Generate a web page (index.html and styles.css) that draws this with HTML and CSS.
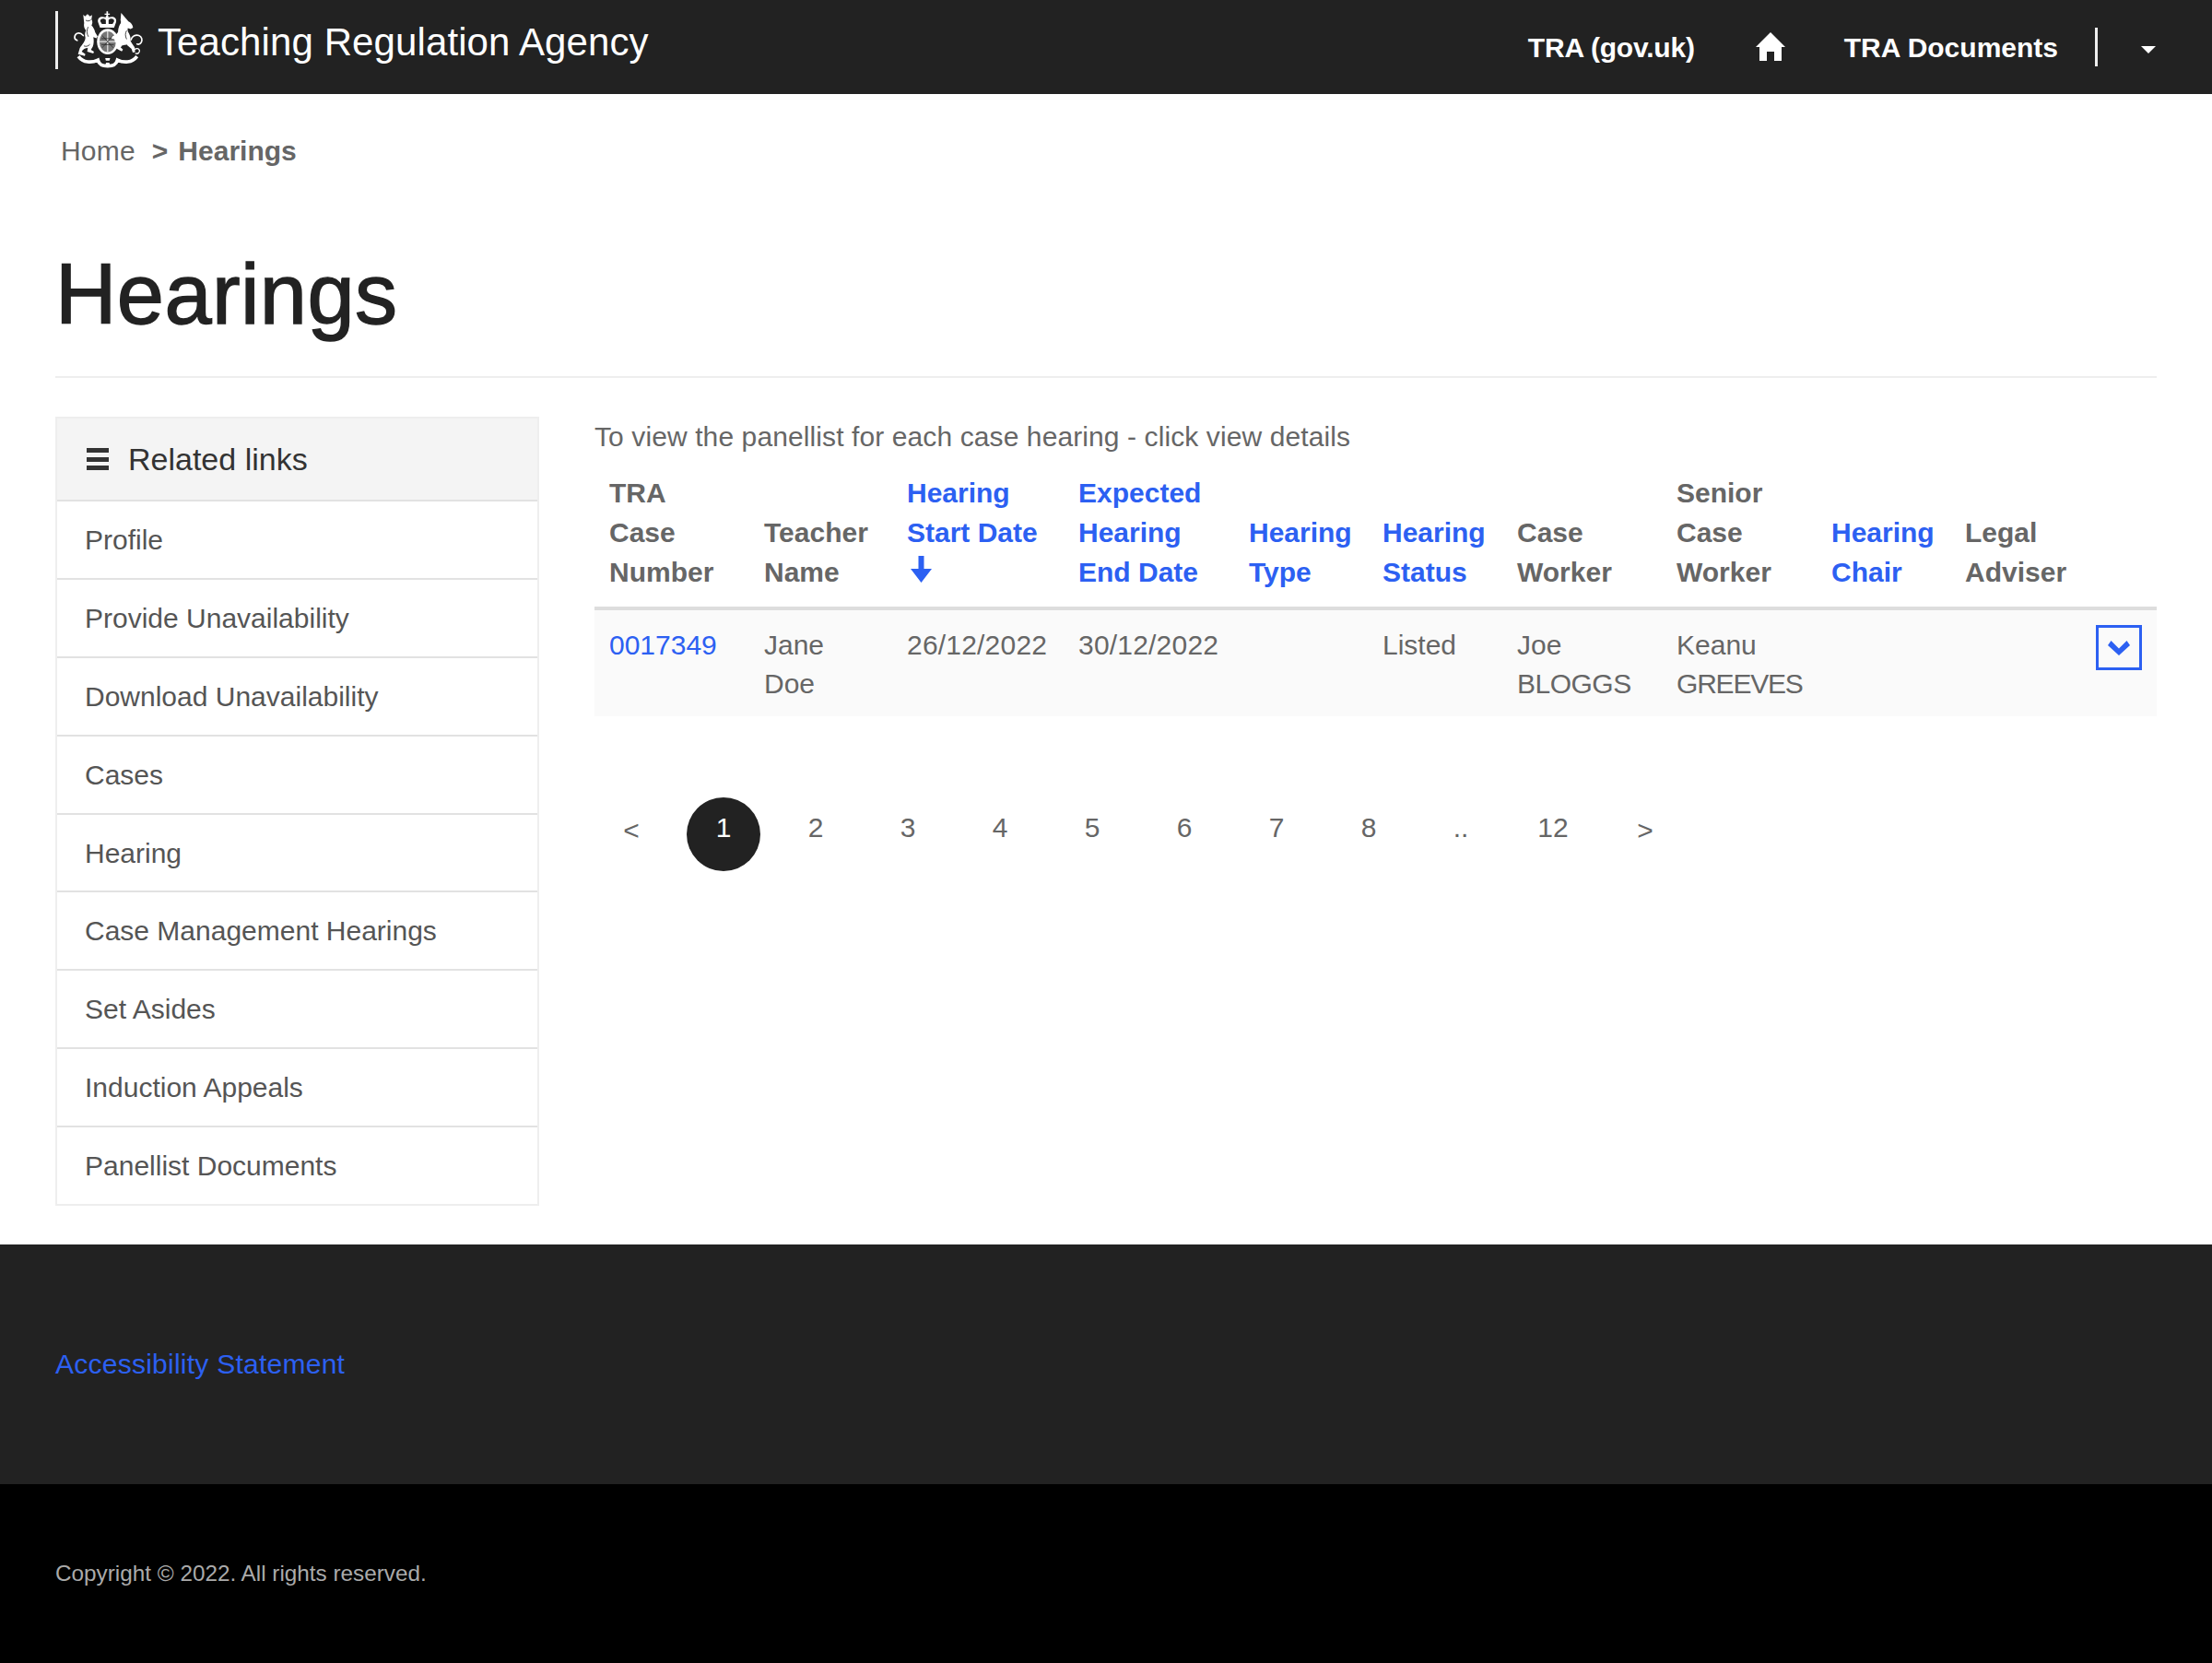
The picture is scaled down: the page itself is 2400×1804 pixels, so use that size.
FILE: index.html
```html
<!DOCTYPE html>
<html lang="en">
<head>
<meta charset="utf-8">
<title>Hearings - Teaching Regulation Agency</title>
<link rel="stylesheet" href="styles.css">
</head>
<body>
<header class="topbar">
  <a class="brand" href="#">
    <svg class="crest" viewBox="57 36 230 190" aria-hidden="true">
      <!-- crown -->
      <g fill="#fff">
        <path d="M166 37h5v7h6v4h-6v6h-5v-6h-6v-4h6z"/>
        <circle cx="168" cy="56" r="5"/>
        <path d="M145 90l-6-16c-4-12 4-20 14-19 7 0 12 3 15 6 3-3 8-6 15-6 10-1 18 7 14 19l-6 16z"/>
      </g>
      <path fill="#222" d="M151 78l-5-8c-1-6 3-9 9-9 3 0 6 1 9 4v13zM173 78V65c3-3 6-4 9-4 6 0 10 3 9 9l-5 8z"/>
      <!-- shield with garter -->
      <ellipse cx="170" cy="136" rx="35" ry="42" fill="#fff"/>
      <ellipse cx="170" cy="136" rx="27" ry="34" fill="#777"/>
      <path fill="none" stroke="#fff" stroke-width="3" d="M170 102v68M143 136h54"/>
      <path fill="none" stroke="#222" stroke-width="2" d="M152 116l36 40M188 116l-36 40M150 126h40M150 146h40"/>
      <!-- lion -->
      <g fill="#fff">
        <path d="M90 48l6 5 8-7 8 7 7-4-2 14c4 6 4 14 0 20 6 6 10 14 12 22l8 14-4 6-10-4c2 10 2 22-2 32l-6 10 10 6-2 6-20-6 2-12c-8 0-16 4-20 12l12 8-2 6-22-6 6-20c8-12 18-22 18-34-2-8-2-16 2-24-6-6-8-16-6-24z"/>
      </g>
      <path fill="none" stroke="#fff" stroke-width="5" stroke-linecap="round" d="M90 116c-12-14-26-8-28 4-1 6 3 10 8 12"/>
      <!-- unicorn -->
      <g fill="#fff">
        <path d="M214 42l24 28c8 3 13 10 15 20l-8 5-9-3c-2 6 0 12 4 18 4 8 6 14 4 22 4 8 8 14 14 22l2 16-8 2-4-12-16-14c-8 0-14 2-20 8l8 8-4 6-18-10 4-14c-6-4-10-10-10-16l-10-2 4-8c8-2 16-8 18-14 0-8 2-16 6-24 4-5 4-10 2-14z"/>
      </g>
      <path fill="none" stroke="#fff" stroke-width="5" stroke-linecap="round" d="M246 130c4-12 16-18 26-14 10 4 12 14 8 22-3 6-8 8-14 6"/>
      <path fill="none" stroke="#fff" stroke-width="4" d="M258 162c6-6 14-4 16 2 2 8-6 14-14 10"/>
      <!-- creature details -->
      <path fill="none" stroke="#222" stroke-width="2.500" d="M98 66c6 4 13 3 17-2M106 88c-5 10-5 22 1 32M92 150c8 3 14 1 20-5M232 100c-5 8-5 18 0 28M216 150c6 3 12 2 18-3"/>
      <!-- motto ribbon -->
      <path fill="none" stroke="#fff" stroke-width="11" d="M74 184c16 22 44 22 64 12 4 16 14 20 32 20s28-4 32-20c20 10 48 10 64-12"/>
      <path fill="#222" d="M166 198h8l2 8h-12z"/>
      <path fill="#fff" d="M162 190h16l-2 8h-12zM165 205h10l3 8h-16z"/>
    </svg>
    <span class="brand-name">Teaching Regulation Agency</span>
  </a>
  <nav class="topnav">
    <a class="topnav-link topnav-gov" href="#">TRA (gov.uk)</a>
    <a class="topnav-home" href="#" aria-label="Home">
      <svg viewBox="0 0 32 31" class="home-icon" aria-hidden="true"><path fill="#fff" d="M16 0 32 16H28V31H20V21H12V31H4V16H0z"/></svg>
    </a>
    <a class="topnav-link topnav-docs" href="#">TRA Documents</a>
    <span class="topnav-divider"></span>
    <span class="topnav-caret"></span>
  </nav>
</header>

<main class="page">
  <div class="crumbs">
    <a class="crumb-home" href="#">Home</a>
    <b class="crumb-sep">&gt;</b>
    <b class="crumb-current">Hearings</b>
  </div>
  <h1 class="page-title">Hearings</h1>

  <div class="content">
    <aside class="sidebar">
      <div class="side-head">
        <span class="burger"><i></i><i></i><i></i></span>
        <span>Related links</span>
      </div>
      <a class="side-item" href="#">Profile</a>
      <a class="side-item" href="#">Provide Unavailability</a>
      <a class="side-item" href="#">Download Unavailability</a>
      <a class="side-item" href="#">Cases</a>
      <a class="side-item" href="#">Hearing</a>
      <a class="side-item" href="#">Case Management Hearings</a>
      <a class="side-item" href="#">Set Asides</a>
      <a class="side-item" href="#">Induction Appeals</a>
      <a class="side-item" href="#">Panellist Documents</a>
    </aside>

    <section class="results">
      <p class="intro">To view the panellist for each case hearing - click view details</p>
      <table class="hearings">
        <colgroup>
          <col class="c-case"><col class="c-teacher"><col class="c-start"><col class="c-end"><col class="c-type">
          <col class="c-status"><col class="c-worker"><col class="c-senior"><col class="c-chair"><col class="c-legal"><col class="c-action">
        </colgroup>
        <thead>
          <tr>
            <th>TRA<br>Case<br>Number</th>
            <th>Teacher<br>Name</th>
            <th><a href="#">Hearing<br>Start Date<br><svg class="sort-arrow" viewBox="0 0 23 29" aria-hidden="true"><path fill="#2c60f2" d="M8.500 0h6v14H23L11.500 29 0 14h8.500z"/></svg></a></th>
            <th><a href="#">Expected<br>Hearing<br>End Date</a></th>
            <th><a href="#">Hearing<br>Type</a></th>
            <th><a href="#">Hearing<br>Status</a></th>
            <th>Case<br>Worker</th>
            <th>Senior<br>Case<br>Worker</th>
            <th><a href="#">Hearing<br>Chair</a></th>
            <th>Legal<br>Adviser</th>
            <th></th>
          </tr>
        </thead>
        <tbody>
          <tr>
            <td><a href="#">0017349</a></td>
            <td>Jane<br>Doe</td>
            <td class="date">26/12/2022</td>
            <td class="date">30/12/2022</td>
            <td></td>
            <td>Listed</td>
            <td>Joe<br><span class="caps">BLOGGS</span></td>
            <td>Keanu<br><span class="caps caps-tight">GREEVES</span></td>
            <td></td>
            <td></td>
            <td class="action-cell">
              <a class="expand" href="#" aria-label="View details">
                <svg viewBox="0 0 24 16" class="chevron" aria-hidden="true"><path fill="#2c60f2" d="M3.500 0 12 8.500 20.500 0 24 5 12 16 0 5z"/></svg>
              </a>
            </td>
          </tr>
        </tbody>
      </table>
      <ul class="pager">
        <li class="pg pg-arrow">&lt;</li>
        <li class="pg pg-active">1</li>
        <li class="pg">2</li>
        <li class="pg">3</li>
        <li class="pg">4</li>
        <li class="pg">5</li>
        <li class="pg">6</li>
        <li class="pg">7</li>
        <li class="pg">8</li>
        <li class="pg">..</li>
        <li class="pg">12</li>
        <li class="pg pg-arrow">&gt;</li>
      </ul>
    </section>
  </div>
</main>

<footer>
  <div class="foot-links"><a href="#">Accessibility Statement</a></div>
  <div class="foot-copy">Copyright © 2022. All rights reserved.</div>
</footer>
</body>
</html>
```

FILE: styles.css
```css
* { box-sizing: border-box; }
html, body { margin: 0; padding: 0; }
body {
  font-family: "Liberation Sans", Arial, sans-serif;
  font-size: 30px;
  line-height: 42px;
  color: #666;
  background: #fff;
}
a { text-decoration: none; color: inherit; }

.topbar {
  height: 102px;
  background: #222;
  display: flex;
  justify-content: space-between;
  padding: 0 61px 0 60px;
}
.brand {
  display: flex;
  align-items: flex-start;
  padding-top: 12px;
  color: #fff;
}
.crest {
  width: 77px;
  height: 63px;
  margin-left: 16px;
}
.brand::before {
  content: "";
  width: 3px;
  height: 63px;
  background: #eee;
  order: -1;
}
.brand-name {
  font-size: 42px;
  line-height: 67px;
  margin-left: 15px;
  letter-spacing: 0.1px;
}
.topnav {
  display: flex;
  align-items: flex-start;
  color: #fff;
  font-weight: 700;
}
.topnav-link { line-height: 42px; padding-top: 31px; }
.topnav-gov { letter-spacing: -0.2px; }
.topnav-home { margin-left: 66px; padding-top: 35px; }
.home-icon { display: block; width: 32px; height: 31px; }
.topnav-docs { margin-left: 64px; }
.topnav-divider {
  width: 3px;
  height: 42px;
  margin-left: 40px;
  margin-top: 30px;
  background: #eee;
}
.topnav-caret {
  width: 0;
  height: 0;
  margin-left: 47px;
  margin-top: 50px;
  border-left: 8px solid transparent;
  border-right: 8px solid transparent;
  border-top: 8px solid #fff;
}

.page { padding: 41px 60px 0; }
.crumbs {
  display: flex;
  padding-left: 6px;
  height: 42px;
}
.crumb-home { letter-spacing: 0.2px; }
.crumb-sep { margin-left: 18px; }
.crumb-current { margin-left: 11px; }
.page-title {
  margin: 75px 0 0;
  height: 150px;
  font-size: 92px;
  line-height: 118px;
  font-weight: 400;
  letter-spacing: 0.4px;
  color: #222;
  -webkit-text-stroke: 1.4px #222;
  border-bottom: 2px solid #eee;
}

.content {
  display: flex;
  align-items: flex-start;
  margin-top: 42px;
  padding-bottom: 42px;
}
.sidebar {
  width: 525px;
  flex: none;
  border: 2px solid #eee;
  border-top: 0;
}
.side-head {
  display: flex;
  align-items: center;
  height: 90px;
  padding-left: 32px;
  background: #f4f4f4;
  color: #333;
  font-size: 34px;
  border-top: 2px solid #eee;
}
.burger {
  display: flex;
  flex-direction: column;
  justify-content: space-between;
  width: 24px;
  height: 24px;
  margin-right: 21px;
}
.burger i { display: block; height: 5px; background: #333; }
.side-item {
  display: block;
  height: 84.900px;
  padding-top: 21px;
  padding-left: 30px;
  color: #555;
  border-top: 2px solid #e2e2e2;
}
.results {
  flex: 1;
  margin-left: 60px;
  min-width: 0;
}
.intro { margin: 1px 0 0; height: 42px; color: #666; letter-spacing: 0.1px; }

.hearings {
  width: 100%;
  table-layout: fixed;
  border-collapse: collapse;
  margin-top: 18px;
}
.c-case { width: 168px; }
.c-teacher { width: 155px; }
.c-start { width: 186px; }
.c-end { width: 185px; }
.c-type { width: 145px; }
.c-status { width: 146px; }
.c-worker { width: 173px; }
.c-senior { width: 168px; }
.c-chair { width: 145px; }
.c-legal { width: 141px; }

.hearings th {
  text-align: left;
  vertical-align: bottom;
  padding: 0 16px 16px;
  font-weight: 700;
  line-height: 43px;
  color: #666;
  white-space: nowrap;
  border-bottom: 4px solid #ddd;
}
.hearings th a { color: #2c60f2; }
.sort-arrow {
  display: inline-block;
  width: 23px;
  height: 29px;
  margin-left: 4px;
  vertical-align: -1px;
}
.hearings td {
  vertical-align: top;
  padding: 17px 16px 14px;
  background: #fafafa;
  white-space: nowrap;
}
.hearings td a { color: #2c60f2; }
.hearings .date { letter-spacing: 0.2px; }
.caps { letter-spacing: -0.5px; }
.caps-tight { letter-spacing: -1.2px; }
.hearings .action-cell { padding: 16px 16px 0 0; text-align: right; }
.hearings td .expand {
  display: inline-flex;
  align-items: center;
  justify-content: center;
  width: 50px;
  height: 49px;
  border: 3px solid #2c60f2;
}
.chevron { display: block; width: 24px; height: 16px; }

.pager {
  display: flex;
  gap: 20px;
  list-style: none;
  margin: 88px 0 0;
  padding: 0;
}
.pg {
  width: 80px;
  height: 80px;
  line-height: 66px;
  text-align: center;
  color: #666;
  flex: none;
}
.pg-arrow { line-height: 72px; }
.pg-active {
  background: #222;
  color: #fff;
  border-radius: 50%;
}

footer { display: block; }
.foot-links {
  height: 260px;
  background: #222;
  padding: 109px 60px 0;
  color: #2c60f2;
  letter-spacing: 0.25px;
}
.foot-copy {
  height: 194px;
  background: #000;
  padding: 77px 60px 0;
  font-size: 24.300px;
  line-height: 40px;
  color: #aaa;
}
```
